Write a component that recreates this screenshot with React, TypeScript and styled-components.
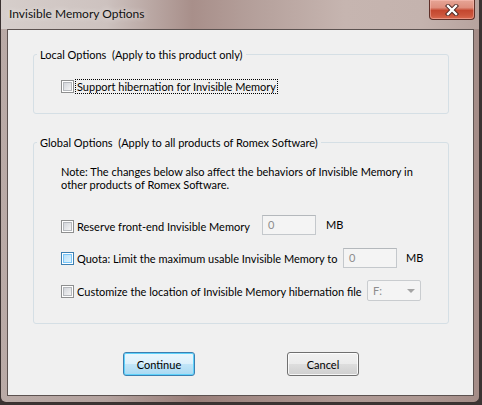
import React from 'react';
import styled, { createGlobalStyle } from 'styled-components';

const GlobalStyle = createGlobalStyle`
  html, body {
    margin: 0;
    padding: 0;
    background: #3b3433;
  }
  body {
    font-family: Lato, 'Liberation Sans', sans-serif;
    font-size: 11px;
    color: #000;
  }
`;

const Window = styled.div`
  width: 480px;
  height: 403px;
  box-sizing: border-box;
  border: 1px solid #3a3130;
  border-top: none;
  border-radius: 0 0 6px 6px;
  padding: 0 5px 6px 6px;
  display: flex;
  flex-direction: column;
  background:
    linear-gradient(180deg, rgba(0, 0, 0, 0) 0px, rgba(0, 0, 0, 0) 29px, rgba(120, 88, 82, 0.3) 29px),
    linear-gradient(90deg, #d6cecb 0%, #cdc2bf 22%, #a88f8a 40%, #b49f9a 52%, #c6b5b0 72%, #c4b3ae 88%, #b7a39e 100%);
`;

const TitleBar = styled.div`
  height: 29px;
  display: flex;
  align-items: flex-start;
  justify-content: space-between;
`;

const Title = styled.div`
  padding: 6px 0 0 2px;
  font-size: 12px;
  line-height: 16px;
  color: #111;
  text-shadow: 0 0 6px rgba(255, 255, 255, 0.8);
`;

const CloseButton = styled.div`
  width: 46px;
  height: 20px;
  margin-right: -1px;
  box-sizing: border-box;
  border: 1px solid #5e2f28;
  border-top: none;
  border-radius: 0 0 4px 4px;
  display: flex;
  align-items: center;
  justify-content: center;
  background: linear-gradient(180deg, #e6a596 0%, #de8e7d 40%, #c4472f 55%, #cc553c 80%, #d96a50 100%);
  box-shadow: inset 0 0 0 1px rgba(255, 200, 190, 0.45);
`;

const Client = styled.div`
  flex: 1;
  background: #f0f0f0;
  border: 1px solid #5c5250;
  display: flex;
  flex-direction: column;
  padding: 17px 24px 0 25px;
`;

const Group = styled.fieldset<{ $gap?: number }>`
  margin: ${p => p.$gap ?? 0}px 0 0 0;
  padding: 0;
  border: 1px solid #d5dfe5;
  border-radius: 3px;
  min-width: 0;
`;

const Legend = styled.legend`
  margin-left: 3px;
  padding: 0 3px;
  line-height: 15px;
  white-space: pre;
`;

const GroupBody = styled.div<{ $top: number; $bottom: number }>`
  padding: ${p => p.$top}px 0 ${p => p.$bottom}px 27px;
  display: flex;
  flex-direction: column;
  align-items: flex-start;
`;

const Note = styled.div`
  line-height: 13px;
  margin-bottom: 24px;
  white-space: nowrap;
`;

const Row = styled.div<{ $gap?: number }>`
  display: flex;
  align-items: flex-start;
  height: 20px;
  margin-top: ${p => p.$gap ?? 0}px;
`;

const CheckLabel = styled.label<{ $width?: number; $offset?: number }>`
  display: flex;
  align-items: center;
  width: ${p => (p.$width ? `${p.$width}px` : 'auto')};
  margin-top: ${p => p.$offset ?? 0}px;
  height: 15px;
  flex-shrink: 0;
`;

const Box = styled.span<{ $hot?: boolean }>`
  position: relative;
  width: 13px;
  height: 13px;
  box-sizing: border-box;
  border: 1px solid ${p => (p.$hot ? '#3c7fb1' : '#8e8f8f')};
  background: #fff;
  flex-shrink: 0;

  &::after {
    content: '';
    position: absolute;
    left: 1px;
    top: 1px;
    right: 1px;
    bottom: 1px;
    box-sizing: border-box;
    border: 1px solid ${p => (p.$hot ? '#79c6f9' : '#b5b8bc')};
    background: ${p =>
      p.$hot
        ? 'linear-gradient(135deg, #b9e0f8 0%, #def2fd 100%)'
        : 'linear-gradient(135deg, #d2d5da 0%, #f4f4f4 100%)'};
  }
`;

const LabelText = styled.span<{ $focus?: boolean }>`
  margin-left: 1px;
  padding: 0 1px;
  line-height: 13px;
  border: 1px ${p => (p.$focus ? 'dotted #000' : 'solid transparent')};
  white-space: nowrap;
`;

const TextBox = styled.div`
  width: 54px;
  height: 20px;
  box-sizing: border-box;
  border: 1px solid #c4c8cc;
  border-top-color: #b4b8bc;
  background: #f4f4f4;
  color: #8d8d8d;
  padding: 2px 0 0 5px;
  line-height: 14px;
`;

const Unit = styled.span<{ $gap: number }>`
  margin-left: ${p => p.$gap}px;
  line-height: 20px;
`;

const Combo = styled.div`
  width: 54px;
  height: 21px;
  box-sizing: border-box;
  border: 1px solid #c9cccf;
  border-radius: 2px;
  background: #f4f4f4;
  color: #8d8d8d;
  display: flex;
  align-items: center;
  justify-content: space-between;
  padding: 0 5px 0 5px;
`;

const ComboArrow = styled.span`
  width: 0;
  height: 0;
  border-left: 4px solid transparent;
  border-right: 4px solid transparent;
  border-top: 4px solid #a4a4a4;
  margin-top: 1px;
`;

const ButtonRow = styled.div`
  display: flex;
  gap: 92px;
  margin: 28px 0 0 90px;
`;

const Button = styled.div<{ $primary?: boolean }>`
  width: 72px;
  height: 24px;
  box-sizing: border-box;
  border: 1px solid ${p => (p.$primary ? '#3c7fb1' : '#707070')};
  border-radius: 3px;
  display: flex;
  align-items: center;
  justify-content: center;
  background: ${p =>
    p.$primary
      ? 'linear-gradient(180deg, #ecf7fd 0%, #dcf0fb 48%, #c1e5f8 52%, #a9d9f2 100%)'
      : 'linear-gradient(180deg, #f2f2f2 0%, #ebebeb 48%, #dddddd 52%, #cfcfcf 100%)'};
  box-shadow: ${p =>
    p.$primary ? 'inset 0 0 0 1px #5fd2fb' : 'inset 0 0 0 1px rgba(255, 255, 255, 0.8)'};
`;

const CloseIcon = () => (
  <svg width="14" height="12" viewBox="0 0 14 12">
    <path d="M3 2 L11 10 M11 2 L3 10" stroke="#4a2420" strokeWidth="4.2" strokeLinecap="square" />
    <path d="M3 2 L11 10 M11 2 L3 10" stroke="#ffffff" strokeWidth="2.4" strokeLinecap="square" />
  </svg>
);

export default function App() {
  return (
    <>
      <GlobalStyle />
      <Window>
        <TitleBar>
          <Title>Invisible Memory Options</Title>
          <CloseButton>
            <CloseIcon />
          </CloseButton>
        </TitleBar>
        <Client>
          <Group>
            <Legend>Local Options  (Apply to this product only)</Legend>
            <GroupBody $top={17} $bottom={19}>
              <CheckLabel>
                <Box />
                <LabelText $focus>Support hibernation for Invisible Memory</LabelText>
              </CheckLabel>
            </GroupBody>
          </Group>

          <Group $gap={21}>
            <Legend>Global Options  (Apply to all products of Romex Software)</Legend>
            <GroupBody $top={15} $bottom={23}>
              <Note>
                Note: The changes below also affect the behaviors of Invisible Memory in
                <br />
                other products of Romex Software.
              </Note>
              <Row>
                <CheckLabel $width={201} $offset={4}>
                  <Box />
                  <LabelText>Reserve front-end Invisible Memory</LabelText>
                </CheckLabel>
                <TextBox>0</TextBox>
                <Unit $gap={10}>MB</Unit>
              </Row>
              <Row $gap={13}>
                <CheckLabel $width={282} $offset={3}>
                  <Box $hot />
                  <LabelText>Quota: Limit the maximum usable Invisible Memory to</LabelText>
                </CheckLabel>
                <TextBox>0</TextBox>
                <Unit $gap={9}>MB</Unit>
              </Row>
              <Row $gap={12}>
                <CheckLabel $width={306} $offset={4}>
                  <Box />
                  <LabelText>Customize the location of Invisible Memory hibernation file</LabelText>
                </CheckLabel>
                <Combo>
                  <span>F:</span>
                  <ComboArrow />
                </Combo>
              </Row>
            </GroupBody>
          </Group>

          <ButtonRow>
            <Button $primary>Continue</Button>
            <Button>Cancel</Button>
          </ButtonRow>
        </Client>
      </Window>
    </>
  );
}
